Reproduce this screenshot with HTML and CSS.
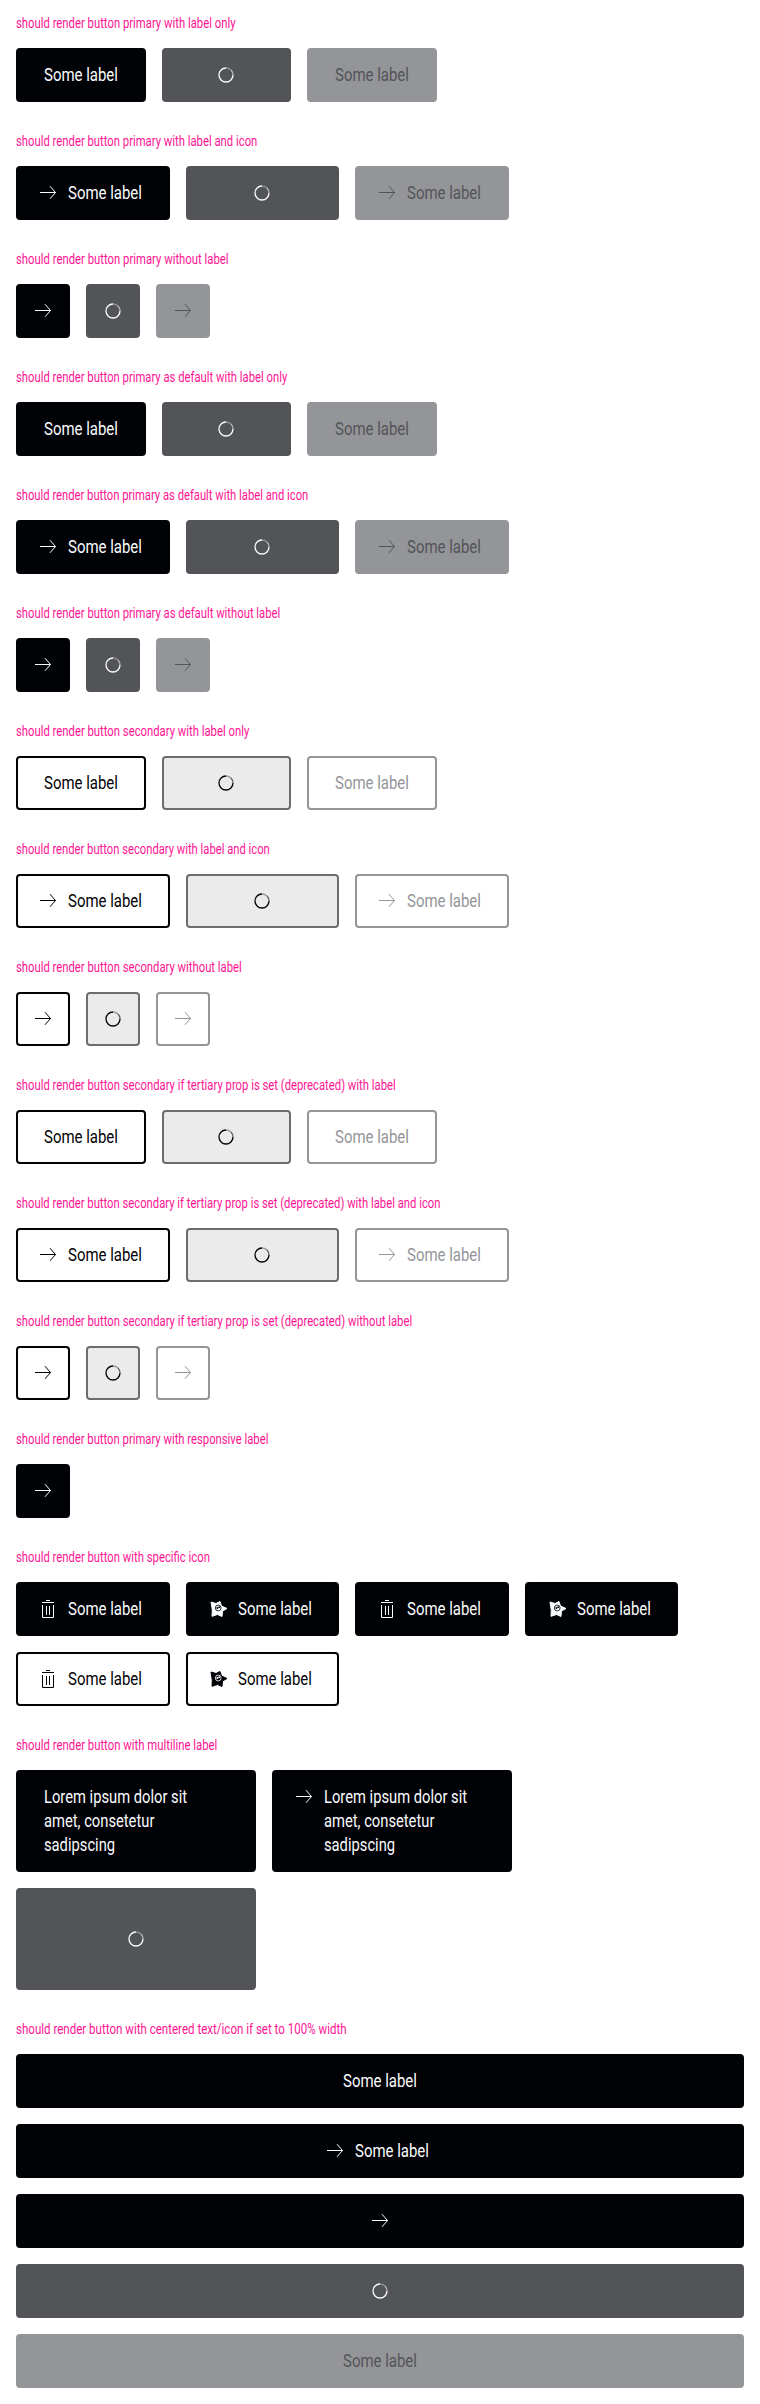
FILE: index.html
```html
<!DOCTYPE html>
<html lang="en"><head><meta charset="utf-8"><title>Button</title><link rel="stylesheet" href="styles.css"></head>
<body><main id="page"></main><script src="app.js"></script></body></html>
```
FILE: styles.css
```css
* { box-sizing: border-box; }
body { margin: 0; background: #fff; font-family: Roboto, sans-serif; }
.section { padding: 16px; }
.title { margin: 0 0 16px; height: 16px; font-size: 14px; line-height: 15px; font-weight: 400; color: #ff1493; white-space: nowrap; }
.title-text { display: inline-block; transform-origin: 0 50%; }
.row { display: flex; flex-wrap: wrap; gap: 16px; }
.btn { display: flex; align-items: flex-start; justify-content: center; width: 129.5px; height: 54px; margin: 0; padding: 13px 0; border: 2px solid #010205; border-radius: 4px; background: #010205; color: #fbfcff; font: 400 17.5px/24px Roboto, sans-serif; text-align: left; }
.with-icon { width: 153.5px; gap: 8px; padding-right: 8px; }
.icon-only { width: 54px; }
.multi { width: 240px; height: 102px; justify-content: flex-start; padding-left: 26px; }
.multi.with-icon { padding-left: 18px; }
.full { width: 100%; }
.secondary { background: #fff; color: #010205; }
.disabled { background: #949598; border-color: #949598; color: #535457; }
.secondary.disabled { background: #fff; color: #949598; }
.loading { align-items: center; justify-content: center; padding: 0; background: #535457; border-color: #535457; }
.secondary.loading { background: #ebebeb; border-color: #6b6d70; }
.label { display: block; width: 73.5px; white-space: nowrap; }
.label-text { display: inline-block; transform-origin: 0 50%; transform: scaleX(0.855); }
.multi .label-text { transform: scaleX(0.842); }
.icon { display: block; flex: none; width: 24px; height: 24px; }
.face-ring { fill: none; stroke: #010205; stroke-width: 0.8; }
.face-dot { fill: #010205; }
.secondary .face-ring { stroke: #fff; }
.secondary .face-dot { fill: #fff; }
```
FILE: app.js
```js
const S = 'Some label';
const LONG = 'Lorem ipsum dolor sit<br>amet, consetetur<br>sadipscing';
const icons = {
  arrow: '<path d="M4 11.5h15.500M14 5.2l5.5 6.300-5.500 6.300" fill="none" stroke="currentColor"/>',
  trash: '<path d="M10 3.5h4M6 5.5h12M6.500 8v12.500h11V8M10.500 9v9M13.500 9v9" fill="none" stroke="currentColor"/>',
  star: '<path d="M5 5l5 1.500 4-2 1.500 4.500 5.500 2.500-4.500 2.500-.5 5.500-4.500-2-5.500 1.800.300-6.300z" fill="currentColor" stroke="currentColor" stroke-linejoin="round"/><circle cx="12.200" cy="11" r="2.900" class="face-ring"/><circle cx="11.400" cy="10.900" r="1" class="face-dot"/><circle cx="13.200" cy="10.200" r=".9" class="face-dot"/>',
  loader: '<g fill="none" stroke="currentColor" stroke-width="1.300"><path d="M19 12A7 7 0 1 1 12 5"/><path d="M12 5a7 7 0 0 1 4.950 2.050" stroke-opacity=".35"/><path d="M16.950 7.050A7 7 0 0 1 19 12" stroke-opacity=".6"/></g>'
};
const svg = n => `<svg class="icon" viewBox="0 0 24 24">${icons[n]}</svg>`;
const btn = (cls, icon, text) => `<button class="btn ${cls}">${icon ? svg(icon) : ''}${text ? `<span class="label"><span class="label-text">${text}</span></span>` : ''}</button>`;
const trio = (v, shape) => {
  const icon = shape ? 'arrow' : '';
  const text = shape === 'icon-only' ? '' : S;
  return btn(`${v} ${shape}`, icon, text) + btn(`${v} ${shape} loading`, 'loader', '') + btn(`${v} ${shape} disabled`, icon, text);
};
const wi = 'with-icon';
const sections = [
  ['should render button primary with label only', 219.5, trio('', '')],
  ['should render button primary with label and icon', 241, trio('', wi)],
  ['should render button primary without label', 212.5, trio('', 'icon-only')],
  ['should render button primary as default with label only', 271, trio('', '')],
  ['should render button primary as default with label and icon', 292.5, trio('', wi)],
  ['should render button primary as default without label', 264, trio('', 'icon-only')],
  ['should render button secondary with label only', 233, trio('secondary', '')],
  ['should render button secondary with label and icon', 254, trio('secondary', wi)],
  ['should render button secondary without label', 225.5, trio('secondary', 'icon-only')],
  ['should render button secondary if tertiary prop is set (deprecated) with label', 379.5, trio('secondary', '')],
  ['should render button secondary if tertiary prop is set (deprecated) with label and icon', 424.5, trio('secondary', wi)],
  ['should render button secondary if tertiary prop is set (deprecated) without label', 396.5, trio('secondary', 'icon-only')],
  ['should render button primary with responsive label', 252.5, btn('icon-only', 'arrow', '')],
  ['should render button with specific icon', 193.5, btn(wi, 'trash', S) + btn(wi, 'star', S) + btn(wi, 'trash', S) + btn(wi, 'star', S) + btn('secondary ' + wi, 'trash', S) + btn('secondary ' + wi, 'star', S)],
  ['should render button with multiline label', 201.5, btn('multi', '', LONG) + btn('multi with-icon', 'arrow', LONG) + btn('multi loading', 'loader', '')],
  ['should render button with centered text/icon if set to 100% width', 330.5, btn('full', '', S) + btn('full with-icon', 'arrow', S) + btn('full', 'arrow', '') + btn('full loading', 'loader', '') + btn('full disabled', '', S)]
];
document.getElementById('page').innerHTML = sections.map(([t, w, b]) => `<section class="section"><h2 class="title"><span class="title-text" data-width="${w}">${t}</span></h2><div class="row">${b}</div></section>`).join('');

// Condense each title to its set width
document.querySelectorAll('.title-text').forEach(el => {
  el.style.transform = `scaleX(${el.dataset.width / el.offsetWidth})`;
});
```
